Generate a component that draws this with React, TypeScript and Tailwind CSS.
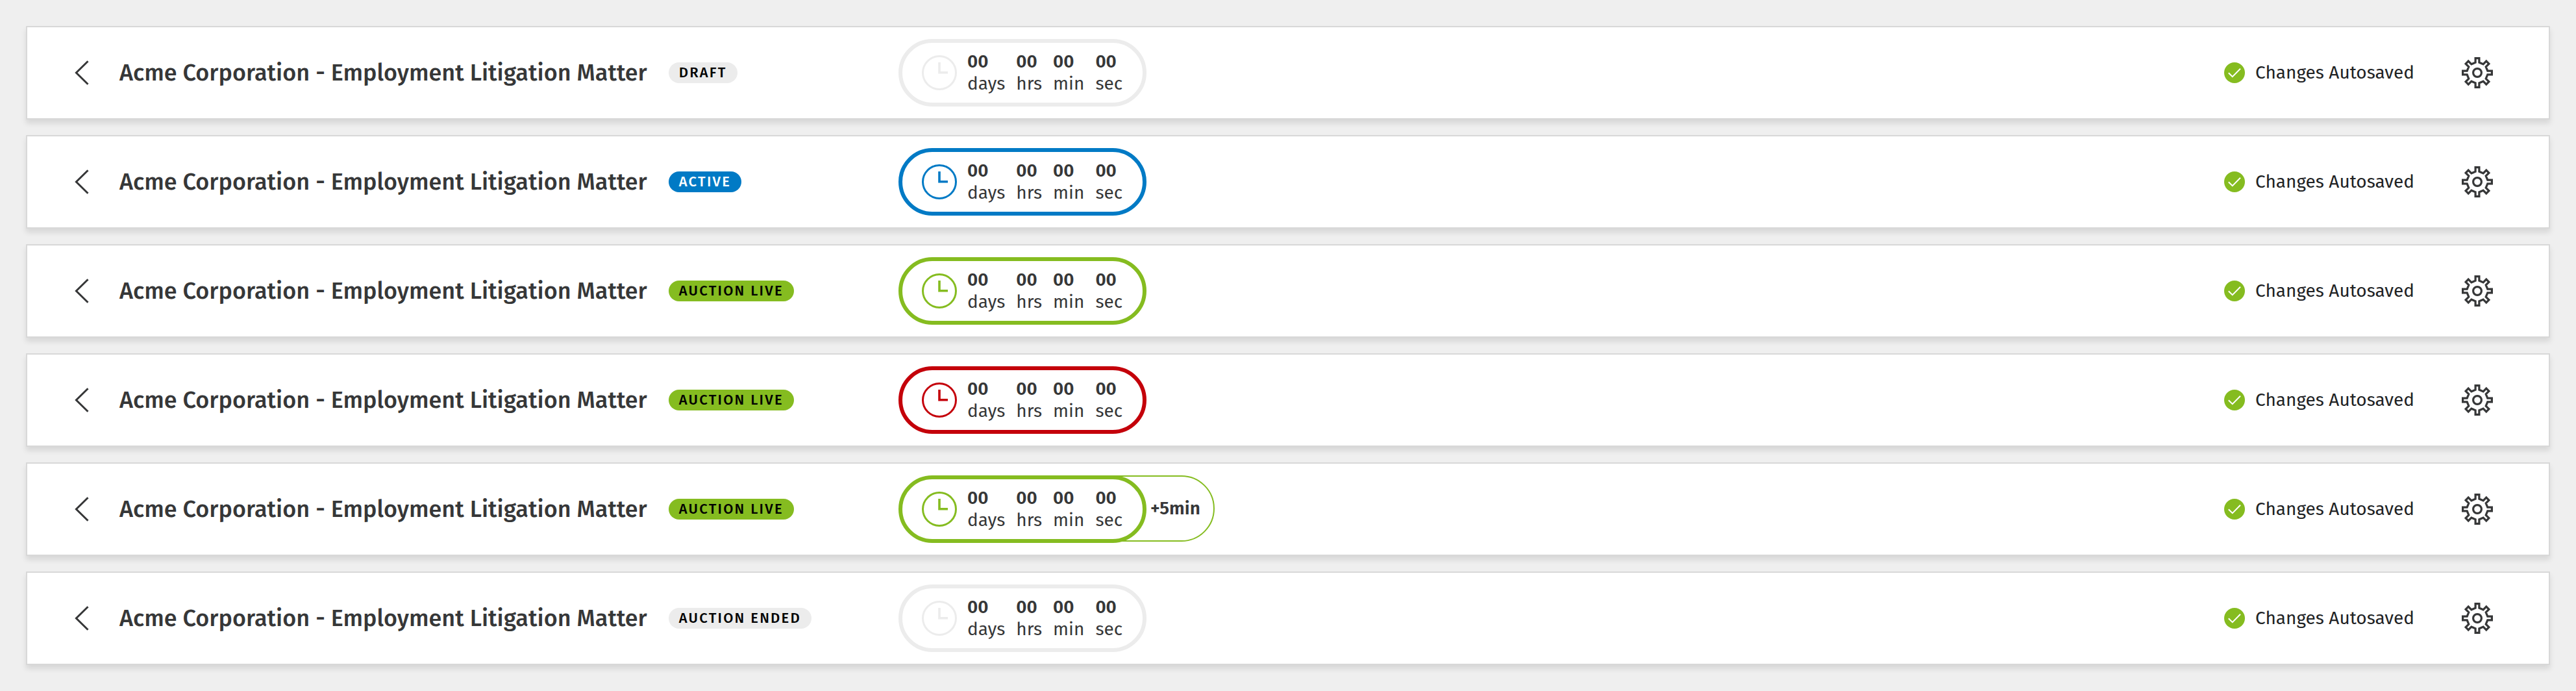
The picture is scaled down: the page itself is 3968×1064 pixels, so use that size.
import { clsx } from "clsx";

type Tone = "idle" | "blue" | "green" | "red";

interface Matter {
  status: string;
  badge: string;
  tone: Tone;
  extension?: string;
}

const TITLE = "Acme Corporation - Employment Litigation Matter";

const MATTERS: Matter[] = [
  { status: "Draft", badge: "bg-[#ececec] text-black", tone: "idle" },
  { status: "Active", badge: "bg-[#007ac5] text-white", tone: "blue" },
  { status: "Auction live", badge: "bg-[#85bc20] text-black", tone: "green" },
  { status: "Auction live", badge: "bg-[#85bc20] text-black", tone: "red" },
  { status: "Auction live", badge: "bg-[#85bc20] text-black", tone: "green", extension: "+5min" },
  { status: "Auction ended", badge: "bg-[#ececec] text-black", tone: "idle" },
];

const UNITS = ["days", "hrs", "min", "sec"];

const TONE_BORDER: Record<Tone, string> = {
  idle: "border-[#ececec]",
  blue: "border-[#007ac5]",
  green: "border-[#85bc20]",
  red: "border-[#c4000a]",
};

const TONE_TEXT: Record<Tone, string> = {
  idle: "text-[#ececec]",
  blue: "text-[#007ac5]",
  green: "text-[#85bc20]",
  red: "text-[#c4000a]",
};

// Eight teeth, each one the same four points turned by 45 degrees
const TOOTH = [[-2.9, -15.8], [-2.9, -22.4], [2.9, -22.4], [2.9, -15.8]];
const GEAR_POINTS = Array.from({ length: 8 }, (_, i) => {
  const a = (i * Math.PI) / 4;
  return TOOTH.map(([x, y]) => {
    const px = 24 + x * Math.cos(a) - y * Math.sin(a);
    const py = 24 + x * Math.sin(a) + y * Math.cos(a);
    return `${px.toFixed(2)},${py.toFixed(2)}`;
  }).join(" ");
}).join(" ");

function ChevronIcon() {
  return (
    <svg width="22" height="38" viewBox="0 0 22 38" fill="none" stroke="currentColor" strokeWidth="3" aria-hidden="true">
      <path d="M20.5 1.2 2.4 19l18.1 17.8" />
    </svg>
  );
}

function ClockIcon() {
  return (
    <svg width="54" height="54" viewBox="0 0 54 54" fill="none" stroke="currentColor" aria-hidden="true">
      <circle cx="27" cy="27" r="25.5" strokeWidth="3" />
      <path d="M27 11v15.7h13" strokeWidth="3.6" />
    </svg>
  );
}

function CheckIcon() {
  return (
    <svg width="32" height="32" viewBox="0 0 32 32" fill="none" aria-hidden="true">
      <circle cx="16" cy="16" r="16" fill="#85bc20" />
      <path d="m6.8 16.2 6 6L25 9.8" stroke="#fff" strokeWidth="2" />
    </svg>
  );
}

function GearIcon() {
  return (
    <svg width="48" height="48" viewBox="0 0 48 48" fill="none" stroke="currentColor" strokeWidth="3.2" aria-hidden="true">
      <polygon points={GEAR_POINTS} />
      <circle cx="24" cy="24" r="6.4" />
    </svg>
  );
}

function Countdown({ tone, extension }: { tone: Tone; extension?: string }) {
  return (
    <div className="flex items-start">
      <div
        role="timer"
        className={clsx(
          "relative z-10 flex h-[104px] w-[382px] items-center gap-4 rounded-full border-6 bg-white pl-[30px]",
          TONE_BORDER[tone],
        )}
      >
        <span className={TONE_TEXT[tone]}>
          <ClockIcon />
        </span>
        <div className="flex gap-[17px] text-[28px] leading-[34px]">
          {UNITS.map(unit => (
            <div key={unit}>
              <div className="font-semibold">00</div>
              <div>{unit}</div>
            </div>
          ))}
        </div>
      </div>

      {/* Added time, tucked in behind the timer */}
      {extension && (
        <div
          className={clsx(
            "-ml-[52px] flex h-[102px] items-center rounded-r-full border-2 pr-[20px] pl-[56px] text-[28px] leading-[34px] font-semibold",
            TONE_BORDER[tone],
          )}
        >
          {extension}
        </div>
      )}
    </div>
  );
}

function MatterHeader({ status, badge, tone, extension }: Matter) {
  return (
    <header className="flex h-36 items-center border-2 border-[#d8d8d8] bg-white shadow-[0_6px_8px_rgba(0,0,0,0.1)]">
      <div className="flex w-[1342px] shrink-0 items-center pl-[73px]">
        <button type="button" aria-label="Back">
          <ChevronIcon />
        </button>
        <h1 className="ml-[47px] text-4xl font-medium whitespace-nowrap">{TITLE}</h1>
        <span
          className={clsx(
            "ml-[33px] rounded-full px-4 text-[22px] leading-8 font-medium tracking-widest whitespace-nowrap uppercase",
            badge,
          )}
        >
          {status}
        </span>
      </div>

      <Countdown tone={tone} extension={extension} />

      <div className="ml-auto flex items-center pr-[86px]">
        <CheckIcon />
        <span className="ml-4 text-[28px] leading-[34px] text-[#212325]">Changes Autosaved</span>
        <button type="button" aria-label="Settings" className="ml-[73px]">
          <GearIcon />
        </button>
      </div>
    </header>
  );
}

export default function App() {
  return (
    <main className="flex min-h-screen flex-col gap-6 bg-[#efefef] p-10 font-['Fira_Sans','Noto_Sans',sans-serif] text-[#363738]">
      {MATTERS.map((matter, i) => (
        <MatterHeader key={i} {...matter} />
      ))}
    </main>
  );
}
